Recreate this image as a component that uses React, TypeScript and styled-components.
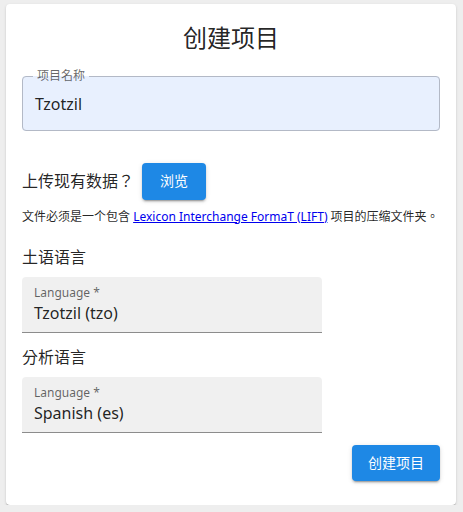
import React from "react";
import styled, { createGlobalStyle } from "styled-components";

const Global = createGlobalStyle`
  html, body { margin: 0; padding: 0; background: #eeeeee; }
  body { font-family: "Noto Sans", "Noto Sans CJK TC", sans-serif; color: rgba(0,0,0,0.87); }
  * { box-sizing: border-box; }
`;

const Card = styled.div`
  width: 450px;
  margin: 4px 0 0 6px;
  background: #fff;
  border-radius: 4px;
  box-shadow: 0px 2px 1px -1px rgba(0,0,0,0.2), 0px 1px 1px 0px rgba(0,0,0,0.14), 0px 1px 3px 0px rgba(0,0,0,0.12);
  padding: 16px 16px 24px;
  display: flex;
  flex-direction: column;
`;

const Title = styled.h1`
  margin: 0;
  font-size: 24px;
  font-weight: 400;
  line-height: 36px;
  text-align: center;
`;

const Outlined = styled.fieldset`
  margin: 12px 0 0;
  padding: 8px 12px 14px;
  border: 1px solid #b3b9c6;
  border-radius: 4px;
  background: #e8f0fe;
  min-width: 0;
`;

const Legend = styled.legend`
  font-size: 12px;
  line-height: 16px;
  color: rgba(0,0,0,0.6);
  padding: 0 4px;
  margin-left: -2px;
`;

const Value = styled.div`
  font-size: 16px;
  line-height: 24px;
  color: rgba(0,0,0,0.87);
`;

const UploadRow = styled.div`
  margin-top: 32px;
  display: flex;
  align-items: center;
  gap: 8px;
`;

const Prompt = styled.span`
  font-size: 16px;
  line-height: 24px;
`;

const Button = styled.button`
  font-family: inherit;
  font-size: 14px;
  line-height: 24.5px;
  padding: 6px 16px;
  min-width: 64px;
  border: 0;
  border-radius: 4px;
  background: #1e88e5;
  color: #fff;
  box-shadow: 0px 3px 1px -2px rgba(0,0,0,0.2), 0px 2px 2px 0px rgba(0,0,0,0.14), 0px 1px 5px 0px rgba(0,0,0,0.12);
  cursor: pointer;
`;

const Caption = styled.p`
  margin: 8px 0 0;
  font-size: 12px;
  line-height: 18px;
  a { color: #0000ee; text-decoration: underline; }
`;

const SectionLabel = styled.div<{ $top: number }>`
  margin-top: ${(p) => p.$top}px;
  font-size: 16px;
  line-height: 24px;
`;

const Filled = styled.div`
  margin-top: 8px;
  width: 300px;
  background: rgba(0,0,0,0.06);
  border-radius: 4px 4px 0 0;
  border-bottom: 1px solid rgba(0,0,0,0.42);
  padding: 8px 12px 7px;
`;

const FilledLabel = styled.div`
  font-size: 12px;
  line-height: 16px;
  color: rgba(0,0,0,0.6);
`;

const Footer = styled.div`
  margin-top: 12px;
  display: flex;
  justify-content: flex-end;
`;

export default function App() {
  return (
    <>
      <Global />
      <Card>
        <Title>创建项目</Title>
        <Outlined>
          <Legend>项目名称</Legend>
          <Value>Tzotzil</Value>
        </Outlined>
        <UploadRow>
          <Prompt>上传现有数据？</Prompt>
          <Button>浏览</Button>
        </UploadRow>
        <Caption>
          文件必须是一个包含 <a href="#">Lexicon Interchange FormaT (LIFT)</a> 项目的压缩文件夹。
        </Caption>
        <SectionLabel $top={19}>土语语言</SectionLabel>
        <Filled>
          <FilledLabel>Language *</FilledLabel>
          <Value>Tzotzil (tzo)</Value>
        </Filled>
        <SectionLabel $top={12}>分析语言</SectionLabel>
        <Filled>
          <FilledLabel>Language *</FilledLabel>
          <Value>Spanish (es)</Value>
        </Filled>
        <Footer>
          <Button>创建项目</Button>
        </Footer>
      </Card>
    </>
  );
}
